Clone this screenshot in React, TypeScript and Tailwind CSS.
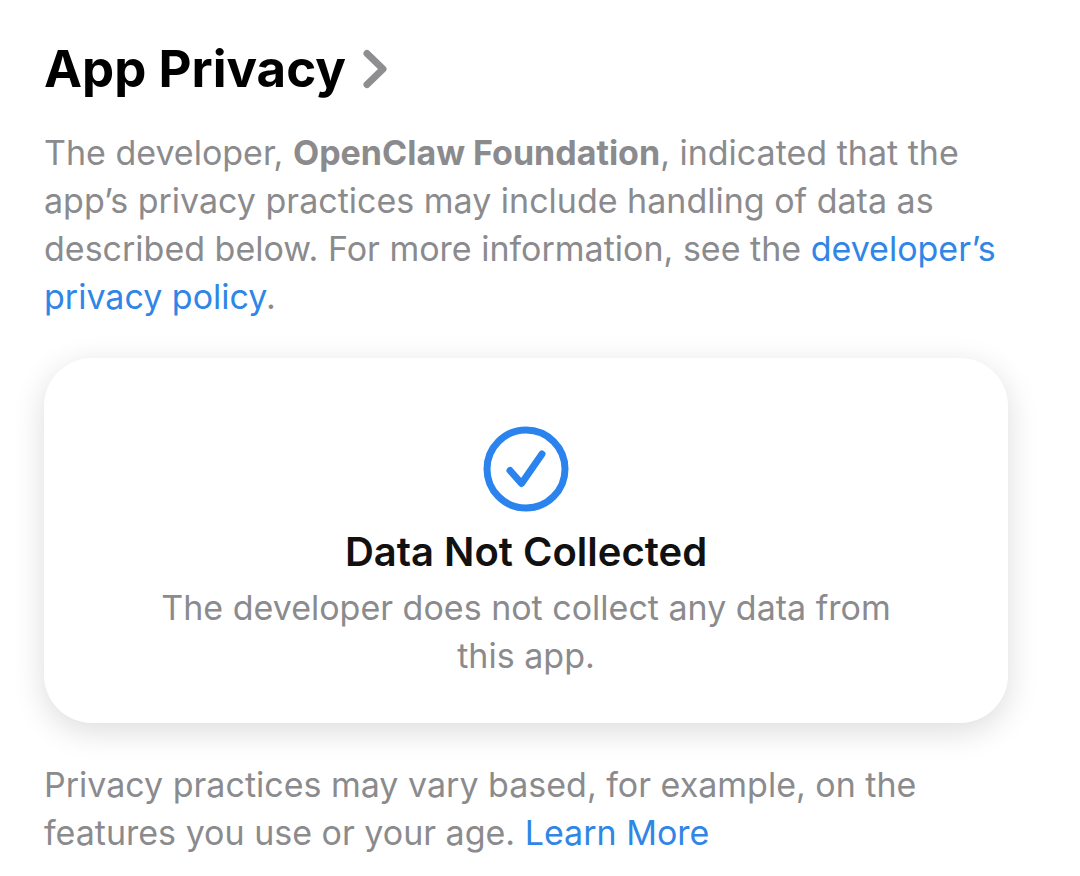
export default function App() {
  return (
    <main className="min-h-screen bg-white pt-[39px] pr-12 pb-5 pl-11 font-['Inter',sans-serif] text-[34px] leading-[48px] text-[#8b8b8e]">
      <h1 className="text-[51px] leading-[60px] font-bold text-black">
        <a href="#privacy" className="flex items-center gap-4">
          App Privacy
          <svg viewBox="0 0 26 42" className="h-[42px] w-[26px]" fill="none" stroke="#8e8e90" strokeWidth="7" strokeLinecap="round" strokeLinejoin="round" aria-hidden="true">
            <path d="M5 5.5 L21 21 L5 36.5" />
          </svg>
        </a>
      </h1>
      <p className="mt-[30px]">
        The developer, <strong className="font-bold">OpenClaw Foundation</strong>, indicated that the app’s privacy practices may include handling of data as described below. For more information, see the{' '}
        <a href="#policy" className="text-[#2f86e6]">developer’s privacy policy</a>.
      </p>
      <section className="mt-[37px] mr-6 flex flex-col items-center rounded-[48px] bg-white px-24 pt-[68px] pb-[43px] text-center shadow-[0_8px_32px_rgba(0,0,0,0.14)]">
        <svg viewBox="0 0 86 86" className="h-[86px] w-[86px]" fill="none" stroke="#2b83ee" strokeWidth="7" strokeLinecap="round" strokeLinejoin="round" aria-hidden="true">
          <circle cx="43" cy="43" r="39" />
          <path d="M27 44.5 L38.5 57.5 L59 28" />
        </svg>
        <h2 className="mt-4 text-[40px] leading-[48px] font-semibold text-[#111]">Data Not Collected</h2>
        <p className="mt-2">The developer does not collect any data from this app.</p>
      </section>
      <p className="mt-[38px] mr-6">
        Privacy practices may vary based, for example, on the features you use or your age.{' '}
        <a href="#learn-more" className="text-[#2f86e6]">Learn More</a>
      </p>
    </main>
  )
}
